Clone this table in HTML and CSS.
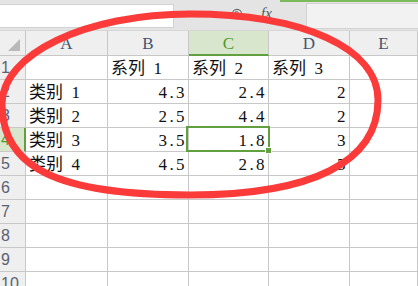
FILE: index.html
```html
<!DOCTYPE html>
<html>
<head>
<meta charset="utf-8">
<link rel="stylesheet" href="styles.css">
</head>
<body>
<div class="app">
  <div class="toolbar">
    <div class="namebox"></div>
    <div class="tools">
      <svg class="zoom-icon" width="12" height="12" viewBox="0 0 12 12"><circle cx="6" cy="6" r="4.6" fill="none" stroke="#666" stroke-width="1.1"/><path d="M4.4 8.2V3.8h1.8a1.1 1.1 0 0 1 0 2.2H4.4M6 6l1.7 2.2" fill="none" stroke="#666" stroke-width="1"/></svg>
      <span class="fx">fx</span>
    </div>
    <div class="formula-wrap"><div class="formula"></div></div>
  </div>
  <div class="sheet">
    <div class="corner"></div>
    <div class="ch">A</div><div class="ch">B</div><div class="ch ch-active">C</div><div class="ch">D</div><div class="ch">E</div>

    <div class="rh">1</div><div class="c"></div><div class="c">系列  1</div><div class="c">系列  2</div><div class="c">系列  3</div><div class="c"></div>
    <div class="rh">2</div><div class="c">类别  1</div><div class="c num">4.3</div><div class="c num">2.4</div><div class="c num">2</div><div class="c"></div>
    <div class="rh">3</div><div class="c">类别  2</div><div class="c num">2.5</div><div class="c num">4.4</div><div class="c num">2</div><div class="c"></div>
    <div class="rh rh-active">4</div><div class="c">类别  3</div><div class="c num">3.5</div><div class="c num sel">1.8</div><div class="c num">3</div><div class="c"></div>
    <div class="rh">5</div><div class="c">类别  4</div><div class="c num">4.5</div><div class="c num">2.8</div><div class="c num">5</div><div class="c"></div>
    <div class="rh">6</div><div class="c"></div><div class="c"></div><div class="c"></div><div class="c"></div><div class="c"></div>
    <div class="rh">7</div><div class="c"></div><div class="c"></div><div class="c"></div><div class="c"></div><div class="c"></div>
    <div class="rh">8</div><div class="c"></div><div class="c"></div><div class="c"></div><div class="c"></div><div class="c"></div>
    <div class="rh">9</div><div class="c"></div><div class="c"></div><div class="c"></div><div class="c"></div><div class="c"></div>
    <div class="rh">10</div><div class="c"></div><div class="c"></div><div class="c"></div><div class="c"></div><div class="c"></div>
  </div>
  <svg class="annot" width="418" height="286" viewBox="0 0 418 286">
    <path d="M190 14 C86 14 2 54 2 104 C2 168 58 195 190 195 C312 195 378 162 378 100 C378 48 303 14 190 14 Z" fill="none" stroke="#fb3a3a" stroke-width="7"/>
  </svg>
</div>
</body>
</html>
```

FILE: styles.css
```css
html, body {
  margin: 0;
  padding: 0;
  width: 418px;
  height: 286px;
  overflow: hidden;
  background: #fff;
}

.app {
  position: relative;
  width: 418px;
  height: 286px;
  overflow: hidden;
  font-family: "Liberation Serif", "Noto Sans CJK SC", serif;
}

.toolbar {
  display: flex;
  height: 31px;
  background: #e4e4e4;
  box-sizing: border-box;
  border-bottom: 1px solid #d6d6d6;
}

.namebox {
  width: 174px;
  height: 24px;
  margin-top: 4px;
  background: #fff;
  box-sizing: border-box;
  border: 1px solid #d2d2d2;
  border-left: none;
}

.tools {
  width: 106px;
  display: flex;
  align-items: center;
  padding-left: 57px;
  box-sizing: border-box;
}

.zoom-icon {
  margin-top: -3px;
}

.fx {
  margin-left: 18px;
  margin-top: -3px;
  font-family: "Liberation Serif", serif;
  font-style: italic;
  font-size: 15px;
  color: #555;
}

.formula-wrap {
  flex: 1;
  border-top: 2px solid #7dbb5a;
  padding: 1px 0 0 26px;
}

.formula {
  height: 26px;
  background: #f2f2f2;
  box-sizing: border-box;
  border: 1px solid #d2d2d2;
  border-right: none;
}

.sheet {
  display: grid;
  grid-template-columns: 26px 82px 81px 80px 81px 1fr;
  grid-template-rows: 25px repeat(10, 24px);
}

.sheet > div {
  box-sizing: border-box;
  border-right: 1px solid #c8c8c8;
  border-bottom: 1px solid #c8c8c8;
}

.corner {
  position: relative;
  background: #efefef;
}

.corner::after {
  content: "";
  position: absolute;
  right: 5px;
  bottom: 4px;
  width: 0;
  height: 0;
  border-left: 12px solid transparent;
  border-bottom: 12px solid #b9b9b9;
}

.ch {
  background: #efefef;
  text-align: center;
  font-size: 17px;
  line-height: 25px;
  color: #46566e;
}

.ch-active {
  background: #d7e6cc;
  color: #4f9a2c;
  border-bottom: 2px solid #62a03f !important;
}

.rh {
  background: #efefef;
  font-family: "Liberation Sans", sans-serif;
  font-size: 16px;
  line-height: 24px;
  padding-left: 1px;
  color: #5a6272;
}

.rh-active {
  background: #d7e6cc;
  color: #4f9a2c;
  border-right: 2px solid #62a03f !important;
}

.c {
  font-size: 17px;
  line-height: 24px;
  padding: 1px 4px 0 3px;
  white-space: pre;
  color: #111;
}

.num {
  text-align: right;
  letter-spacing: 2.4px;
  padding-right: 1px;
}

.sel {
  position: relative;
}

.sel::before {
  content: "";
  position: absolute;
  left: -3px;
  top: -2px;
  right: -2px;
  bottom: -1px;
  border: 2px solid #62a03f;
}

.sel::after {
  content: "";
  position: absolute;
  right: -4px;
  bottom: -3px;
  width: 5px;
  height: 5px;
  background: #62a03f;
  border: 1px solid #fff;
}

.annot {
  position: absolute;
  left: 0;
  top: 0;
  pointer-events: none;
}
```
